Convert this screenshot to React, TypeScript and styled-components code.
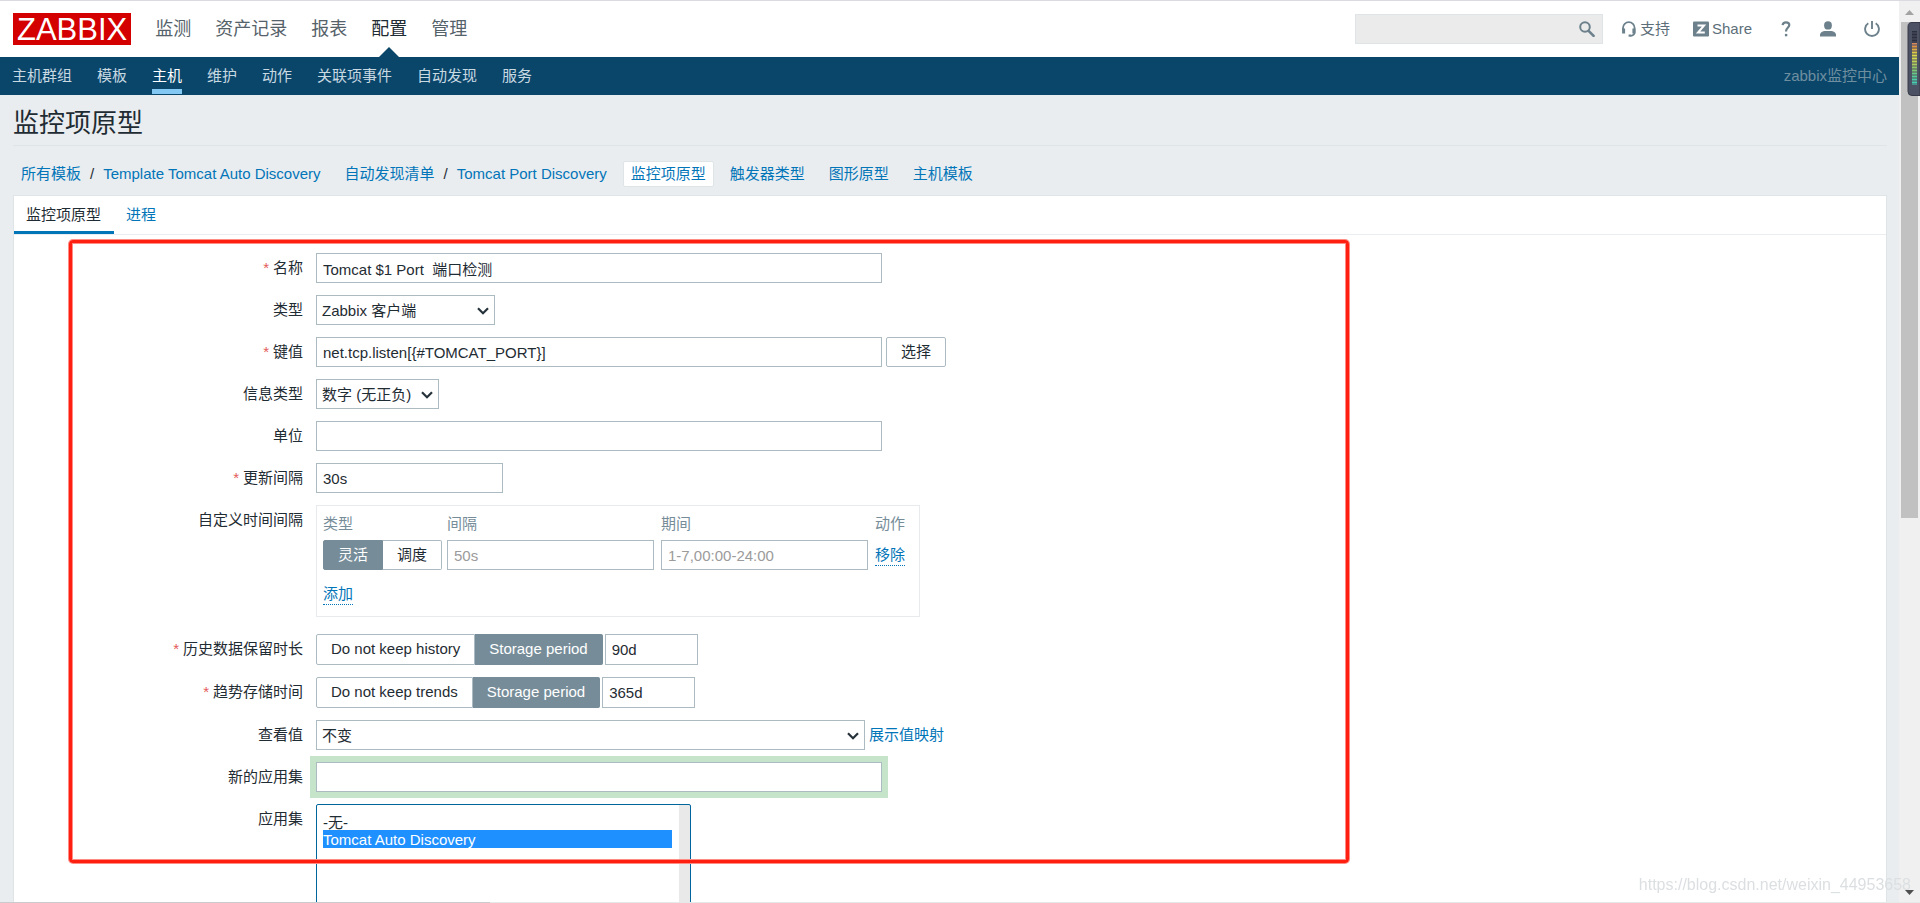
import React from 'react';
import styled, { createGlobalStyle, css } from 'styled-components';

const color = {
  text: '#1f2c33',
  link: '#0275b8',
  muted: '#768d99',
  icon: '#6d818c',
  border: '#acbbc2',
  line: '#dfe4e7',
  navy: '#0a466a',
  page: '#e9edf0',
};

const GlobalStyle = createGlobalStyle`
  *, *::before, *::after { box-sizing: border-box; }
  body {
    margin: 0;
    overflow: hidden;
    color: ${color.text};
    background: ${color.page};
    font: 15px/20px "Liberation Sans", "Noto Sans CJK SC", sans-serif;
  }
  button, input, select { font: inherit; color: inherit; margin: 0; }
  a { color: ${color.link}; text-decoration: none; }
  svg { display: block; flex: none; }
`;

const Window = styled.div`
  display: flex;
  height: 100vh;
  border-top: 1px solid #dadae0;
`;

const Page = styled.div`
  flex: 1;
  min-width: 0;
  overflow: hidden;
`;

const Header = styled.header`
  display: flex;
  align-items: center;
  height: 56px;
  padding: 0 19px 0 13px;
  background: #fff;
`;

const Logo = styled.a`
  padding: 2px 4px 0;
  background: #d40000;
  color: #fff;
  font-size: 31px;
  line-height: 30px;
`;

const MainNav = styled.nav`
  display: flex;
  align-self: stretch;
  gap: 24px;
  margin-left: 24px;
  margin-right: auto;
`;

const MainLink = styled.a<{ $active?: boolean }>`
  position: relative;
  color: ${(p) => (p.$active ? color.text : '#56626a')};
  font-size: 18px;
  line-height: 56px;

  ${(p) =>
    p.$active &&
    css`
      &::after {
        content: '';
        position: absolute;
        left: 50%;
        bottom: 0;
        margin-left: -10px;
        border: 10px solid transparent;
        border-top: 0;
        border-bottom-color: ${color.navy};
      }
    `}
`;

const Search = styled.form`
  display: flex;
  align-items: center;
  width: 248px;
  height: 30px;
  margin-right: 18px;
  border: 1px solid ${color.line};
  background: #ebebeb;
`;

const SearchInput = styled.input`
  flex: 1;
  min-width: 0;
  height: 28px;
  border: 0;
  background: transparent;
  outline: 0;
`;

const IconButton = styled.button`
  padding: 0 7px;
  border: 0;
  background: transparent;
`;

const Tools = styled.div`
  display: flex;
  align-items: center;
  gap: 28px;
`;

const ToolPair = styled.div`
  display: flex;
  gap: 23px;
`;

const ToolLink = styled.a`
  display: flex;
  align-items: center;
  gap: 3px;
  color: #5d6f79;
`;

const SubNav = styled.nav`
  display: flex;
  align-items: stretch;
  gap: 25px;
  height: 38px;
  padding: 0 12px;
  background: ${color.navy};
`;

const SubLink = styled.a<{ $active?: boolean }>`
  height: 37px;
  border-bottom: 5px solid ${(p) => (p.$active ? '#83c9f4' : 'transparent')};
  color: ${(p) => (p.$active ? '#fff' : '#c8d9e2')};
  line-height: 37px;
`;

const ServerName = styled.span`
  margin-left: auto;
  color: #6f8fa0;
  line-height: 38px;
`;

const Content = styled.main`
  padding: 0 12px 0 13px;
`;

const Title = styled.h1`
  height: 51px;
  margin: 0;
  border-bottom: 1px solid ${color.line};
  font-size: 26px;
  font-weight: 400;
  line-height: 57px;
`;

const Crumbs = styled.nav`
  display: flex;
  align-items: center;
  gap: 8px;
  height: 49px;
  padding-top: 6px;
`;

const Crumb = styled.span<{ $selected?: boolean }>`
  display: flex;
  gap: 9px;
  height: 26px;
  padding: 0 7px;
  border: 1px solid ${(p) => (p.$selected ? color.line : 'transparent')};
  border-radius: 2px;
  background: ${(p) => (p.$selected ? '#fff' : 'transparent')};
  line-height: 24px;
`;

const Panel = styled.section`
  position: relative;
  border: 1px solid ${color.line};
  background: #fff;
`;

const Tabs = styled.div`
  display: flex;
  border-bottom: 1px solid #ebeef0;
`;

const Tab = styled.a<{ $active?: boolean }>`
  height: 38px;
  padding: 0 13px 0 12px;
  border-bottom: 3px solid ${(p) => (p.$active ? color.link : 'transparent')};
  color: ${(p) => (p.$active ? color.text : color.link)};
  line-height: 38px;
`;

const Form = styled.form`
  display: flex;
  flex-direction: column;
  gap: 12px;
  padding: 18px 0 24px;
`;

const Row = styled.div<{ $spaced?: boolean }>`
  display: flex;
  align-items: flex-start;
  gap: 13px;
  margin-bottom: ${(p) => (p.$spaced ? 5 : 0)}px;
`;

const labelStyle = css`
  flex: none;
  width: 289px;
  line-height: 30px;
  text-align: right;
`;

const Label = styled.label`
  ${labelStyle}
`;

const GroupLabel = styled.span`
  ${labelStyle}
`;

const Star = styled.span`
  margin-right: 4px;
  color: #e45959;
`;

const Field = styled.div<{ $gap?: number }>`
  display: flex;
  align-items: center;
  gap: ${(p) => p.$gap ?? 4}px;
`;

const TextInput = styled.input<{ $width: number; $tall?: boolean; $glow?: boolean }>`
  width: ${(p) => p.$width}px;
  height: ${(p) => (p.$tall ? 31 : 30)}px;
  padding: 0 6px;
  border: 1px solid ${color.border};
  border-radius: 0;
  background: #fff;
  outline: 0;
  box-shadow: ${(p) => (p.$glow ? '0 0 0 6px #c6e4c9' : 'none')};

  &::placeholder { color: #9b9b9b; opacity: 1; }
`;

const SelectBox = styled.div<{ $width: number }>`
  position: relative;
  width: ${(p) => p.$width}px;

  select {
    display: block;
    width: 100%;
    height: 30px;
    padding: 2px 24px 0 5px;
    border: 1px solid ${color.border};
    border-radius: 0;
    background: #fff;
    appearance: none;
  }

  svg {
    position: absolute;
    top: 12px;
    right: 6px;
    pointer-events: none;
  }
`;

const Button = styled.button`
  height: 30px;
  padding: 0 14px;
  border: 1px solid ${color.border};
  border-radius: 2px;
  background: #fff;
`;

const Segments = styled.div`
  display: flex;
`;

const Segment = styled.label<{ $tall?: boolean }>`
  height: ${(p) => (p.$tall ? 31 : 30)}px;
  padding: 0 14px;
  border: 1px solid ${color.border};
  border-radius: 2px 0 0 2px;
  line-height: 28px;
  white-space: nowrap;

  & + & {
    border-left: 0;
    border-radius: 0 2px 2px 0;
  }

  &:has(input:checked) {
    border-color: #768d99;
    background: #768d99;
    color: #fff;
  }

  input {
    position: absolute;
    opacity: 0;
    pointer-events: none;
  }
`;

const IntervalBox = styled.div`
  width: 604px;
  padding: 4px 6px;
  border: 1px solid #e8ebed;
`;

const IntervalTable = styled.table`
  width: 100%;
  border-collapse: collapse;
  table-layout: fixed;

  th, td {
    height: 30px;
    padding: 0;
    text-align: left;
    vertical-align: middle;
  }
  th { padding-bottom: 2px; color: ${color.muted}; font-weight: 400; }
  input { display: block; }
  tfoot td { height: 42px; padding-top: 6px; }
`;

const DottedButton = styled.button`
  display: block;
  padding: 0;
  border: 0;
  border-bottom: 1px dotted ${color.link};
  background: transparent;
  color: ${color.link};
`;

const ListBox = styled.select`
  display: block;
  width: 375px;
  height: 186px;
  padding: 7px 18px 7px 6px;
  border: 1px solid #00659c;
  border-radius: 2px;
  outline: 0;
  background: linear-gradient(#e9e9e9, #e9e9e9) right / 11px 100% no-repeat #fff;
  scrollbar-width: none;

  option {
    display: flex;
    align-items: center;
    min-height: 18px;
    height: 18px;
    padding: 0;
  }
  option:checked {
    background: linear-gradient(#1e90ff, #1e90ff);
    -webkit-text-fill-color: #fff;
  }
`;

const Highlight = styled.div`
  position: absolute;
  top: 44px;
  left: 55px;
  width: 1280px;
  height: 623px;
  border: 3px solid #ff1f10;
  border-radius: 4px;
  box-shadow: 0 0 0 1px #ff8d86, inset 0 0 0 1px #ff8d86;
  pointer-events: none;
`;

const ScrollTrack = styled.div`
  display: flex;
  flex-direction: column;
  align-items: center;
  width: 21px;
  padding: 9px 1px 8px 0;
  background: #f0f0f0;
`;

const ScrollThumb = styled.div`
  width: 17px;
  height: 56%;
  margin-top: 7px;
  margin-bottom: auto;
  background: #c1c1c1;
`;

const MeterHolder = styled.div`
  position: fixed;
  top: 22px;
  right: 0;
`;

const Watermark = styled.div`
  position: fixed;
  right: 9px;
  bottom: 8px;
  color: #dcdfe1;
  font-size: 16px;
  pointer-events: none;
`;

const StatusEdge = styled.div`
  position: fixed;
  left: 0;
  bottom: 0;
  width: 100%;
  height: 1px;
  background: linear-gradient(90deg, #c9cbcc 0 490px, #e4eae8 490px);
`;

const SearchIcon = () => (
  <svg width="16" height="16" viewBox="0 0 16 16" fill="none" stroke={color.icon}>
    <circle cx="6" cy="6" r="4.8" strokeWidth="2" />
    <path d="M9.6 9.8l5 5" strokeWidth="2.6" strokeLinecap="round" />
  </svg>
);

const HeadsetIcon = () => (
  <svg width="16" height="16" viewBox="0 0 16 16" fill="none" stroke={color.icon}>
    <path d="M2 9V7a5.8 5.8 0 0 1 11.6 0v4c0 2.4-1.4 3.6-4 3.8" strokeWidth="1.8" />
    <path d="M2.6 7.5v5M12.9 7.5v5" strokeWidth="3" />
    <path d="M7.6 14.6h2.6" strokeWidth="2.2" />
  </svg>
);

const ShareIcon = () => (
  <svg width="16" height="16" viewBox="0 0 16 16">
    <rect y="0.5" width="16" height="15" rx="1" fill={color.icon} />
    <path d="M4.5 4.4h6.6L5 11.6h6.8" fill="none" stroke="#fff" strokeWidth="2" />
  </svg>
);

const HelpIcon = () => (
  <svg width="12" height="16" viewBox="0 0 12 16" fill="none" stroke={color.icon} strokeWidth="2.2">
    <path d="M2.6 4.2C2.8 2.4 4 1.4 6 1.4s3.3 1 3.3 2.7c0 2.5-3.2 2.8-3.2 5.6v.9" />
    <path d="M6.1 12.9v2.4" strokeWidth="2.4" />
  </svg>
);

const UserIcon = () => (
  <svg width="16" height="16" viewBox="0 0 16 16" fill={color.icon}>
    <ellipse cx="8" cy="4.4" rx="3.9" ry="4.2" />
    <path d="M0 15.6v-1.8C0 11.4 3 10 5.4 10h5.2c2.4 0 5.4 1.4 5.4 3.8v1.8z" />
  </svg>
);

const PowerIcon = () => (
  <svg width="16" height="16" viewBox="0 0 16 16" fill="none" stroke={color.icon} strokeWidth="1.9">
    <path d="M4.3 2.3a6.9 6.9 0 1 0 7.4 0" />
    <path d="M8 0v8" />
  </svg>
);

const Chevron = () => (
  <svg width="12" height="8" viewBox="0 0 12 8" fill="none" stroke="#26323a" strokeWidth="2.2">
    <path d="M1 1.2l5 5 5-5" />
  </svg>
);

const Arrow = ({ down }: { down?: boolean }) => (
  <svg width="9" height="5" viewBox="0 0 9 5" fill={down ? '#4f4f4f' : '#a3a3a3'}>
    <path d={down ? 'M0 0h9L4.5 5z' : 'M0 5h9L4.5 0z'} />
  </svg>
);

const meterBars = [
  '#2b2e3c', '#2b2e3c', '#2b2e3c', '#2b2e3c', '#d98a5c', '#e0963f', '#dfae42', '#dccb45', '#d9d94a',
  '#d3d84e', '#bcd257', '#a9cd60', '#8ec768', '#7cc777', '#66c98c', '#55cb9a', '#4bcdaa', '#45d0b4',
];

const Meter = () => (
  <svg width="13" height="74" viewBox="0 0 13 74">
    <path d="M13 .5H5a4 4 0 0 0-4 4v65a4 4 0 0 0 4 4h8z" fill="#4c5163" stroke="#363949" />
    {meterBars.map((fill, i) => (
      <g key={i} fill={fill}>
        <rect x="5" y={9 + i * 3} width="5" height="1" />
        <rect x="5" y={10 + i * 3} width="5" height="2" opacity="0.5" />
      </g>
    ))}
  </svg>
);

const mainItems = ['监测', '资产记录', '报表', '配置', '管理'];
const subItems = ['主机群组', '模板', '主机', '维护', '动作', '关联项事件', '自动发现', '服务'];
const crumbs = [
  ['所有模板', 'Template Tomcat Auto Discovery'],
  ['自动发现清单', 'Tomcat Port Discovery'],
  ['监控项原型'],
  ['触发器类型'],
  ['图形原型'],
  ['主机模板'],
];

type FormRowProps = {
  label: string;
  id?: string;
  required?: boolean;
  spaced?: boolean;
  gap?: number;
  children: React.ReactNode;
};

const FormRow = ({ label, id, required, spaced, gap, children }: FormRowProps) => {
  const caption = (
    <>
      {required && <Star>*</Star>}
      {label}
    </>
  );
  return (
    <Row $spaced={spaced}>
      {id ? <Label htmlFor={id}>{caption}</Label> : <GroupLabel>{caption}</GroupLabel>}
      <Field $gap={gap}>{children}</Field>
    </Row>
  );
};

type SelectProps = { id: string; width: number; options: string[] };

const Select = ({ id, width, options }: SelectProps) => (
  <SelectBox $width={width}>
    <select id={id}>
      {options.map((o) => (
        <option key={o}>{o}</option>
      ))}
    </select>
    <Chevron />
  </SelectBox>
);

type RadiosProps = { name: string; options: string[]; selected: number; tall?: boolean };

const Radios = ({ name, options, selected, tall }: RadiosProps) => (
  <Segments role="radiogroup" aria-label={name}>
    {options.map((o, i) => (
      <Segment key={o} $tall={tall}>
        <input type="radio" name={name} defaultChecked={i === selected} />
        {o}
      </Segment>
    ))}
  </Segments>
);

export default function App() {
  return (
    <>
      <GlobalStyle />
      <Window>
        <Page>
          <Header>
            <Logo href="#">ZABBIX</Logo>
            <MainNav>
              {mainItems.map((item) => (
                <MainLink key={item} href="#" $active={item === '配置'}>
                  {item}
                </MainLink>
              ))}
            </MainNav>
            <Search>
              <SearchInput type="text" aria-label="搜索" />
              <IconButton type="button" aria-label="搜索">
                <SearchIcon />
              </IconButton>
            </Search>
            <Tools>
              <ToolPair>
                <ToolLink href="#">
                  <HeadsetIcon />
                  支持
                </ToolLink>
                <ToolLink href="#">
                  <ShareIcon />
                  Share
                </ToolLink>
              </ToolPair>
              <ToolLink href="#" aria-label="帮助">
                <HelpIcon />
              </ToolLink>
              <ToolLink href="#" aria-label="用户">
                <UserIcon />
              </ToolLink>
              <ToolLink href="#" aria-label="退出">
                <PowerIcon />
              </ToolLink>
            </Tools>
          </Header>
          <SubNav>
            {subItems.map((item) => (
              <SubLink key={item} href="#" $active={item === '主机'}>
                {item}
              </SubLink>
            ))}
            <ServerName>zabbix监控中心</ServerName>
          </SubNav>

          <Content>
            <Title>监控项原型</Title>
            <Crumbs>
              {crumbs.map((parts) => (
                <Crumb key={parts[0]} $selected={parts[0] === '监控项原型'}>
                  {parts.map((part, i) => (
                    <React.Fragment key={part}>
                      {i > 0 && <span>/</span>}
                      <a href="#">{part}</a>
                    </React.Fragment>
                  ))}
                </Crumb>
              ))}
            </Crumbs>

            <Panel>
              <Tabs>
                <Tab href="#" $active>
                  监控项原型
                </Tab>
                <Tab href="#">进程</Tab>
              </Tabs>
              <Form>
                <FormRow label="名称" id="name" required>
                  <TextInput id="name" $width={566} defaultValue={'Tomcat $1 Port  端口检测'} />
                </FormRow>
                <FormRow label="类型" id="type">
                  <Select id="type" width={179} options={['Zabbix 客户端']} />
                </FormRow>
                <FormRow label="键值" id="key" required>
                  <TextInput id="key" $width={566} defaultValue="net.tcp.listen[{#TOMCAT_PORT}]" />
                  <Button type="button">选择</Button>
                </FormRow>
                <FormRow label="信息类型" id="value_type">
                  <Select id="value_type" width={123} options={['数字 (无正负)']} />
                </FormRow>
                <FormRow label="单位" id="units">
                  <TextInput id="units" $width={566} />
                </FormRow>
                <FormRow label="更新间隔" id="delay" required>
                  <TextInput id="delay" $width={187} defaultValue="30s" />
                </FormRow>
                <FormRow label="自定义时间间隔" spaced>
                  <IntervalBox>
                    <IntervalTable>
                      <colgroup>
                        <col width="124" />
                        <col width="214" />
                        <col width="214" />
                        <col />
                      </colgroup>
                      <thead>
                        <tr>
                          <th>类型</th>
                          <th>间隔</th>
                          <th>期间</th>
                          <th>动作</th>
                        </tr>
                      </thead>
                      <tbody>
                        <tr>
                          <td>
                            <Radios name="interval_type" options={['灵活', '调度']} selected={0} />
                          </td>
                          <td>
                            <TextInput aria-label="间隔" $width={207} placeholder="50s" />
                          </td>
                          <td>
                            <TextInput aria-label="期间" $width={207} placeholder="1-7,00:00-24:00" />
                          </td>
                          <td>
                            <DottedButton type="button">移除</DottedButton>
                          </td>
                        </tr>
                      </tbody>
                      <tfoot>
                        <tr>
                          <td colSpan={4}>
                            <DottedButton type="button">添加</DottedButton>
                          </td>
                        </tr>
                      </tfoot>
                    </IntervalTable>
                  </IntervalBox>
                </FormRow>
                <FormRow label="历史数据保留时长" id="history" required gap={2}>
                  <Radios name="history_mode" options={['Do not keep history', 'Storage period']} selected={1} tall />
                  <TextInput id="history" $width={93} $tall defaultValue="90d" />
                </FormRow>
                <FormRow label="趋势存储时间" id="trends" required gap={2}>
                  <Radios name="trends_mode" options={['Do not keep trends', 'Storage period']} selected={1} tall />
                  <TextInput id="trends" $width={93} $tall defaultValue="365d" />
                </FormRow>
                <FormRow label="查看值" id="valuemap">
                  <Select id="valuemap" width={549} options={['不变']} />
                  <a href="#">展示值映射</a>
                </FormRow>
                <FormRow label="新的应用集" id="new_application">
                  <TextInput id="new_application" $width={566} $glow />
                </FormRow>
                <FormRow label="应用集" id="applications">
                  <ListBox id="applications" multiple defaultValue={['Tomcat Auto Discovery']}>
                    <option>-无-</option>
                    <option>Tomcat Auto Discovery</option>
                  </ListBox>
                </FormRow>
              </Form>
              <Highlight />
            </Panel>
          </Content>
        </Page>
        <ScrollTrack>
          <Arrow />
          <ScrollThumb />
          <Arrow down />
        </ScrollTrack>
      </Window>
      <MeterHolder>
        <Meter />
      </MeterHolder>
      <Watermark>https://blog.csdn.net/weixin_44953658</Watermark>
      <StatusEdge />
    </>
  );
}
